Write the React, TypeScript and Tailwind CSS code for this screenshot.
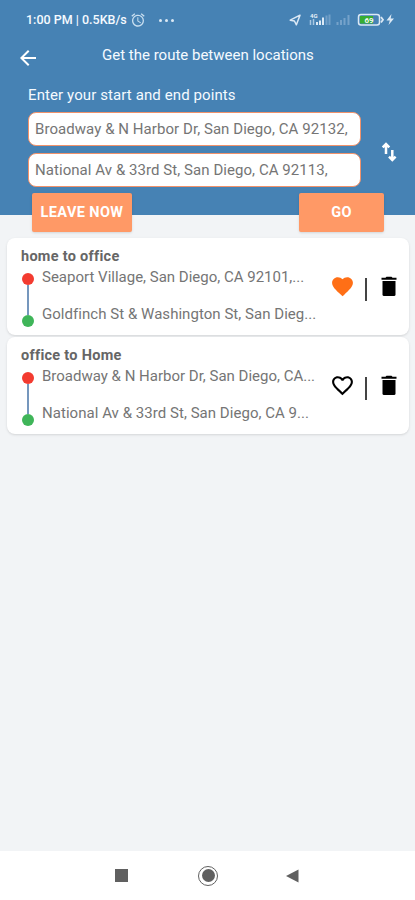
import React, { useState } from "react";
import {
  MdAlarm,
  MdArrowBack,
  MdFavorite,
  MdFavoriteBorder,
} from "react-icons/md";

type SavedRoute = {
  title: string;
  start: string;
  end: string;
  favorite: boolean;
};

const savedRoutes: SavedRoute[] = [
  {
    title: "home to office",
    start: "Seaport Village, San Diego, CA 92101,...",
    end: "Goldfinch St & Washington St, San Dieg...",
    favorite: true,
  },
  {
    title: "office to Home",
    start: "Broadway & N Harbor Dr, San Diego, CA...",
    end: "National Av & 33rd St, San Diego, CA 9...",
    favorite: false,
  },
];

const StatusIcons = () => (
  <svg width="110" height="16" viewBox="0 0 110 16" fill="none">
    <path
      d="M2.2 8.2 12 3.2 8.4 12.8 6.4 9Z"
      stroke="#dce9f5"
      strokeWidth="1.5"
      strokeLinejoin="round"
    />
    <text x="22" y="6.2" fontSize="6" fontWeight="700" fill="#e3eef7">
      4G
    </text>
    <path d="M22.5 8v5M25.5 7v6" stroke="#a9c8e2" strokeWidth="1.5" />
    <path d="M29 10v3M32 8.5v4.5M35 5.5v7.5" stroke="#dce9f5" strokeWidth="2" />
    <path d="M38.5 3.5v9.5M41.5 2.5v10.5" stroke="#719fc8" strokeWidth="2" />
    <path
      d="M49.5 10v3M53 8v5M56.5 6v7M60.5 3v10"
      stroke="#75a2ca"
      strokeWidth="2"
    />
    <rect x="70.5" y="2.5" width="21" height="10.5" rx="2.5" stroke="#dce9f5" strokeWidth="1.5" />
    <rect x="72" y="4" width="13" height="7.5" fill="#37ad32" />
    <path d="M93 5 95 7.7 93 10.5" stroke="#dce9f5" strokeWidth="1.8" />
    <text x="76.5" y="10.7" fontSize="8" fontWeight="700" fill="#f1f7f0">
      69
    </text>
    <path d="M103.5 2 98.5 8.5h3.3L100.5 13l5.5-6.5h-3.3Z" fill="#dce9f5" />
  </svg>
);

const SwapIcon = () => (
  <svg width="16" height="20" viewBox="0 0 16 20" fill="none">
    <path d="M5 12V3M1.7 5.4 5 2 8.3 5.4" stroke="#fff" strokeWidth="2.5" />
    <path d="M11.3 8v9M8 14.6 11.3 18 14.6 14.6" stroke="#fff" strokeWidth="2.5" />
  </svg>
);

const TrashIcon = () => (
  <svg width="16" height="21" viewBox="0 0 16 21" fill="#000">
    <path d="M.5 1.7H4.500L5.500.700h5l1 1h4v2H.5Z" />
    <path d="M1.500 5h13v13.500a1.500 1.500 0 0 1-1.500 1.500H3a1.500 1.500 0 0 1-1.500-1.500Z" />
  </svg>
);

const RouteCard = ({
  route,
  onToggle,
}: {
  route: SavedRoute;
  onToggle: () => void;
}) => {
  return (
    <div className="flex h-[97px] rounded-lg bg-white pl-3.5 shadow-sm">
      <div className="w-[310px] shrink-0">
        <h2 className="mt-[9px] h-[19px] text-[14.5px] leading-[19px] font-bold tracking-[0.28px] text-[#666]">
          {route.title}
        </h2>
        <div className="flex">
          <div className="flex w-[21px] shrink-0 flex-col items-start pt-[7px] pl-[1px]">
            <span className="size-3 rounded-full bg-[#f33b30]" />
            <span className="ml-[5px] h-[30px] w-[2px] bg-[#7597bd]" />
            <span className="size-3 rounded-full bg-[#3fb559]" />
          </div>
          <div className="pt-[1px] text-[15px] whitespace-nowrap text-[#757575]">
            <p className="h-[37px] leading-[20px]">{route.start}</p>
            <p className="leading-[20px] tracking-[0.04px]">{route.end}</p>
          </div>
        </div>
      </div>
      <div className="mt-[36px] flex h-[26px] items-start">
        <button onClick={onToggle} className="-ml-[1px] w-6">
          {route.favorite ? (
            <MdFavorite className="size-[25px] text-[#ff6f16]" />
          ) : (
            <MdFavoriteBorder className="size-[25px] text-black" />
          )}
        </button>
        <span className="mt-[4px] ml-[11px] h-[23px] w-[2px] bg-[#444]" />
        <button className="mt-[2px] ml-[14px]">
          <TrashIcon />
        </button>
      </div>
    </div>
  );
};

const App = () => {
  const [routes, setRoutes] = useState(savedRoutes);
  const [start, setStart] = useState(
    "Broadway & N Harbor Dr, San Diego, CA 92132,"
  );
  const [end, setEnd] = useState("National Av & 33rd St, San Diego, CA 92113,");

  const toggleFavorite = (index: number) => {
    setRoutes(
      routes.map((route, i) =>
        i === index ? { ...route, favorite: !route.favorite } : route
      )
    );
  };

  return (
    <div className="flex h-[900px] w-[415px] flex-col overflow-hidden bg-[#f2f4f6] font-[Roboto,sans-serif]">
      <header className="h-[215px] shrink-0 bg-[#4682b4] text-[#f5faff]">
        <div className="flex h-[38px] items-center pt-[2px] pl-[26px] text-[12px] font-medium">
          <span className="w-[104px] text-[12.5px] whitespace-nowrap">
            1:00 PM | 0.5KB/s
          </span>
          <MdAlarm className="size-[16px] text-[#c9dff0]" />
          <span className="ml-[13px] flex w-[15px] justify-between">
            <i className="size-[3px] rounded-full bg-[#dce9f5]" />
            <i className="size-[3px] rounded-full bg-[#dce9f5]" />
            <i className="size-[3px] rounded-full bg-[#dce9f5]" />
          </span>
          <span className="ml-[114px]">
            <StatusIcons />
          </span>
        </div>
        <div className="flex h-[40px] items-center pl-4">
          <button className="mb-[1px]">
            <MdArrowBack className="size-[24px] text-white" />
          </button>
          <h1 className="mb-[6px] ml-[62px] text-[15px] whitespace-nowrap">
            Get the route between locations
          </h1>
        </div>
        <p className="h-[34px] pt-[7px] pl-7 text-[15px] leading-[20px] tracking-[0.1px]">
          Enter your start and end points
        </p>
        <div className="flex items-center pl-7">
          <div className="flex w-[333px] flex-col gap-[7px]">
            <input
              value={start}
              onChange={(e) => setStart(e.target.value)}
              className="h-[34px] w-full rounded-lg border-[1.5px] border-[#f0926b] bg-white px-1.5 text-[15px] tracking-[0.06px] text-[#757575] outline-none"
            />
            <input
              value={end}
              onChange={(e) => setEnd(e.target.value)}
              className="h-[34px] w-full rounded-lg border-[1.5px] border-[#f0926b] bg-white px-1.5 text-[15px] tracking-[0.06px] text-[#757575] outline-none"
            />
          </div>
          <button className="mt-[4px] ml-5">
            <SwapIcon />
          </button>
        </div>
        <div className="mt-[6px] flex justify-between pr-[31px] pl-8 text-[14.5px] font-bold tracking-[0.4px] text-white">
          <button className="h-[39px] w-[100px] rounded-[2px] bg-[#ff9966] pt-[1px] whitespace-nowrap shadow-sm">
            LEAVE NOW
          </button>
          <button className="h-[39px] w-[85px] rounded-[2px] bg-[#ff9966] pt-[1px] shadow-sm">
            GO
          </button>
        </div>
      </header>
      <main className="mt-[23px] flex flex-1 flex-col gap-[2px] pr-[6px] pl-[7px]">
        {routes.map((route, index) => (
          <RouteCard
            key={route.title}
            route={route}
            onToggle={() => toggleFavorite(index)}
          />
        ))}
      </main>
      <nav className="flex h-[49px] shrink-0 items-center bg-white pl-[115px]">
        <span className="size-[13px] bg-[#606060]" />
        <span className="ml-[70px] flex size-[20px] items-center justify-center rounded-full border-[1.5px] border-[#606060]">
          <i className="size-[13px] rounded-full bg-[#606060]" />
        </span>
        <svg className="ml-[68px]" width="13" height="14" viewBox="0 0 13 14">
          <path d="M0 7 12.5 .5v13Z" fill="#606060" />
        </svg>
      </nav>
    </div>
  );
};

export default App;
